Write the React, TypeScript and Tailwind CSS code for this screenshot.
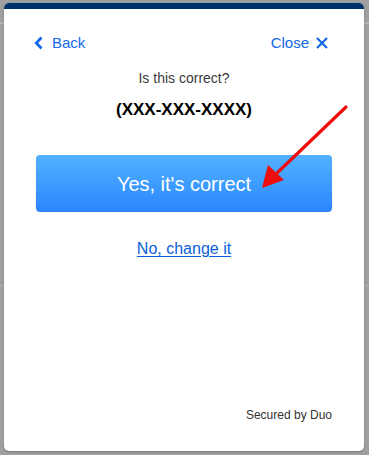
import React from "react";

export default function App() {
    return (
        <div
            className="w-[369px] h-[455px] bg-[#9f9f9f] relative overflow-hidden"
            style={{ fontFamily: '"Liberation Sans", Arial, sans-serif' }}
        >
            <div className="absolute left-0 right-0 top-[22px] h-[2px] bg-[#b4b4b4]" />
            <div className="absolute left-0 right-0 top-[285px] h-[1px] bg-[#b0b0b0]" />

            <div className="absolute left-[4px] top-[3px] w-[360px] h-[448px] bg-white rounded-[5px] overflow-hidden flex flex-col shadow-[0_1px_2px_rgba(0,0,0,0.25)]">
                <div className="h-[6px] bg-[#00306b] shrink-0" />

                <div className="flex items-center justify-between pl-[30px] pr-[36px] mt-[23px] text-[15px] text-[#1369e6]">
                    <button className="flex items-center gap-[8px]">
                        <svg width="10" height="14" viewBox="0 0 10 14" fill="none">
                            <path d="M7.5 1.5 L2.3 7 L7.5 12.5" stroke="#1369e6" strokeWidth="2.8" />
                        </svg>
                        <span>Back</span>
                    </button>
                    <button className="flex items-center gap-[7px]">
                        <span>Close</span>
                        <svg width="12" height="12" viewBox="0 0 12 12" fill="none">
                            <path d="M1 1 L11 11 M11 1 L1 11" stroke="#1369e6" strokeWidth="2.2" />
                        </svg>
                    </button>
                </div>

                <p className="mt-[13px] text-center text-[14px] text-[#3a3a3a]">Is this correct?</p>
                <p className="mt-[8px] text-center text-[17px] font-bold text-black">(XXX-XXX-XXXX)</p>

                <button className="mx-[32px] mt-[33px] h-[57px] rounded-[4px] bg-gradient-to-b from-[#52b1ff] to-[#2a86fe] text-white text-[20px]">
                    Yes, it's correct
                </button>

                <div className="mt-[25px] text-center">
                    <a className="text-[16px] text-[#0c5fd8] underline underline-offset-2">No, change it</a>
                </div>

                <div className="flex-1" />
                <p className="self-end mr-[32px] mb-[27px] text-[12px] text-[#333]">Secured by Duo</p>
            </div>

            <svg className="absolute left-0 top-0" width="369" height="455" viewBox="0 0 369 455">
                <line x1="346" y1="107" x2="276" y2="174" stroke="#ee0c0c" strokeWidth="3.2" strokeLinecap="round" />
                <polygon points="262,188 268,165 284,180" fill="#ee0c0c" />
            </svg>
        </div>
    );
}
